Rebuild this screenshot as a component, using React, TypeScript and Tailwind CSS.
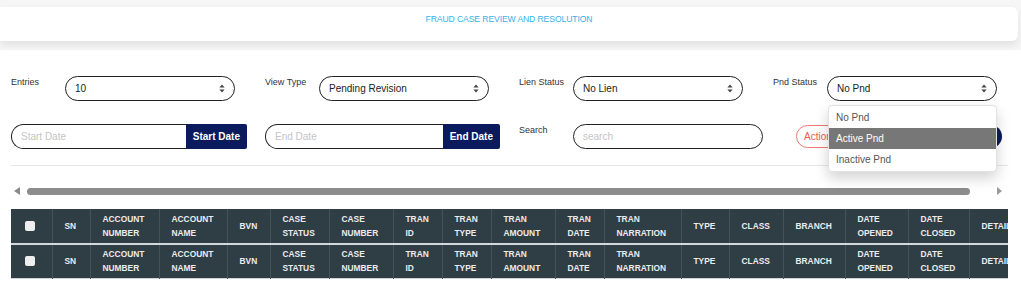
const COLUMNS = [
  { key: "sn", label: ["SN"], w: 38 },
  { key: "accno", label: ["ACCOUNT", "NUMBER"], w: 69 },
  { key: "accname", label: ["ACCOUNT", "NAME"], w: 68 },
  { key: "bvn", label: ["BVN"], w: 43 },
  { key: "cstatus", label: ["CASE", "STATUS"], w: 59 },
  { key: "cnumber", label: ["CASE", "NUMBER"], w: 64 },
  { key: "tid", label: ["TRAN", "ID"], w: 49 },
  { key: "ttype", label: ["TRAN", "TYPE"], w: 49 },
  { key: "tamount", label: ["TRAN", "AMOUNT"], w: 64 },
  { key: "tdate", label: ["TRAN", "DATE"], w: 49 },
  { key: "tnarr", label: ["TRAN", "NARRATION"], w: 77 },
  { key: "type", label: ["TYPE"], w: 48 },
  { key: "class", label: ["CLASS"], w: 54 },
  { key: "branch", label: ["BRANCH"], w: 62 },
  { key: "dopened", label: ["DATE", "OPENED"], w: 63 },
  { key: "dclosed", label: ["DATE", "CLOSED"], w: 61 },
  { key: "details", label: ["DETAILS"], w: 70 },
];

function SortArrows() {
  return (
    <svg width="6" height="9" viewBox="0 0 6 9" className="shrink-0">
      <path d="M3 0.5 L5.6 3.6 H0.4 Z" fill="#444" />
      <path d="M3 8.5 L5.6 5.4 H0.4 Z" fill="#444" />
    </svg>
  );
}

function FakeSelect({ value }: { value: string }) {
  return (
    <div className="w-[170px] h-[25px] shrink-0 flex items-center justify-between rounded-full border-[1.5px] border-[#222] bg-white px-[9px] text-[10px] text-[#222]">
      <span>{value}</span>
      <SortArrows />
    </div>
  );
}

function Label({ text }: { text: string }) {
  return <span className="w-[54px] shrink-0 mt-[1px] text-[9px] leading-[11px] text-[#333]">{text}</span>;
}

function DateField({ placeholder, width }: { placeholder: string; width: string }) {
  return (
    <div className={`${width} flex h-[25px]`}>
      <div className="flex-1 flex items-center rounded-l-full border-[1.5px] border-r-0 border-[#222] pl-[9px] text-[10px] text-[#c4c4c4]">
        {placeholder}
      </div>
      <button className="h-[25px] rounded-r-[2px] bg-[#0b1a5c] px-[7px] text-[10px] font-bold text-white">
        {placeholder}
      </button>
    </div>
  );
}

function HeaderRow({ last }: { last?: boolean }) {
  return (
    <tr
      className={`bg-[#2f3d45] ${last ? "h-[34px] border-b border-[#cfd4d7]" : "h-[35px] border-b-2 border-[#d3d8db]"}`}
    >
      <th className="w-[41px] pl-[14px] text-left">
        <div className="h-[10px] w-[10px] rounded-[2px] bg-[#eeeeee]" />
      </th>
      {COLUMNS.map((c) => (
        <th
          key={c.key}
          style={{ width: c.w }}
          className="border-l border-[#44525a] pl-[12px] text-left align-middle text-[8.4px] font-bold leading-[14px] text-[#ececec] whitespace-nowrap"
        >
          {c.label.map((l) => (
            <div key={l}>{l}</div>
          ))}
        </th>
      ))}
    </tr>
  );
}

export default function App() {
  return (
    <div className="min-h-screen w-[1021px] bg-[#f6f6f6] pt-[7px] font-['Liberation_Sans',Arial,sans-serif]">
      {/* title bar */}
      <header className="mr-[3px] h-[34px] rounded-r-[6px] bg-white pt-[7px] text-center shadow-[0_4px_8px_rgba(0,0,0,0.09)]">
        <h1 className="text-[8.6px] leading-[11px] tracking-[-0.1px] text-[#35b2ea]">FRAUD CASE REVIEW AND RESOLUTION</h1>
      </header>

      {/* body */}
      <main className="mt-[9px] h-[250px] bg-white pl-[11px] pt-[26px]">
        {/* row 1 */}
        <div className="flex">
          <div className="flex w-[254px] shrink-0 items-start">
            <Label text="Entries" />
            <FakeSelect value="10" />
          </div>
          <div className="flex w-[254px] shrink-0 items-start">
            <Label text="View Type" />
            <FakeSelect value="Pending Revision" />
          </div>
          <div className="flex w-[254px] shrink-0 items-start">
            <Label text="Lien Status" />
            <FakeSelect value="No Lien" />
          </div>
          <div className="relative flex w-[240px] shrink-0 items-start">
            <Label text="Pnd Status" />
            <FakeSelect value="No Pnd" />
            {/* open dropdown */}
            <div className="absolute left-[55px] top-[29px] z-10 w-[169px] overflow-hidden rounded-[4px] border border-[#e2e2e2] bg-white py-[1px] text-[10px] text-[#555] shadow-[0_6px_14px_rgba(0,0,0,0.18)]">
              <div className="flex h-[21px] items-center pl-[7px]">No Pnd</div>
              <div className="flex h-[21px] items-center bg-[#777777] pl-[7px] text-white">Active Pnd</div>
              <div className="flex h-[21px] items-center pl-[7px]">Inactive Pnd</div>
            </div>
          </div>
        </div>

        {/* row 2 */}
        <div className="mt-[23px] flex">
          <div className="w-[254px] shrink-0">
            <DateField placeholder="Start Date" width="w-[236px]" />
          </div>
          <div className="w-[254px] shrink-0">
            <DateField placeholder="End Date" width="w-[235px]" />
          </div>
          <div className="flex w-[254px] shrink-0 items-start">
            <Label text="Search" />
            <div className="flex h-[25px] w-[190px] items-center rounded-full border-[1.5px] border-[#222] pl-[9px] text-[10px] text-[#c4c4c4]">
              search
            </div>
          </div>
          <div className="flex items-center gap-[6px] pl-[23px]">
            <button className="h-[23px] w-[80px] shrink-0 rounded-full border border-[#f07a72] pl-[7px] text-left text-[10px] text-[#ec5a50]">
              Action
            </button>
            <button className="h-[23px] w-[120px] shrink-0 rounded-full bg-[#0b1a5c] text-[10px] font-bold text-white">
              Submit
            </button>
          </div>
        </div>

        <div className="mt-[16px] w-[997px] border-t border-[#e6e6e6]" />

        {/* horizontal scrollbar */}
        <div className="mt-[21px] flex h-[8px] w-[997px] items-center">
          <div className="ml-[3px] h-0 w-0 border-y-[4px] border-r-[6px] border-y-transparent border-r-[#8a8a8a]" />
          <div className="ml-[7px] h-[7px] flex-1 rounded-full bg-[#8c8c8c]" />
          <div className="ml-[27px] mr-[6px] h-0 w-0 border-y-[4px] border-l-[5px] border-y-transparent border-l-[#9a9a9a]" />
        </div>

        {/* table */}
        <div className="mt-[14px] w-[997px] overflow-hidden">
          <table className="w-[1028px] table-fixed border-collapse">
            <thead>
              <HeaderRow />
              <HeaderRow last />
            </thead>
          </table>
        </div>
      </main>
    </div>
  );
}
